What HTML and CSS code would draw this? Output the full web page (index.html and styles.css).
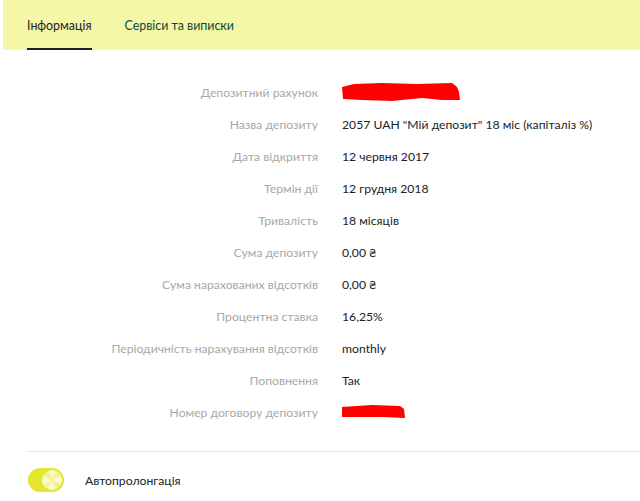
FILE: index.html
```html
<!DOCTYPE html>
<html lang="uk">
<head>
<meta charset="utf-8">
<link rel="stylesheet" href="styles.css">
</head>
<body>
<div class="tabs">
  <div class="tab active">Інформація</div>
  <div class="tab">Сервіси та виписки</div>
</div>
<div class="info">
  <div class="row"><div class="label">Депозитний рахунок</div><div class="value"><svg class="redact" width="120" height="20" viewBox="0 0 120 20"><path d="M0 5 L12 2 L40 1 L75 2 L110 1 L115 5 L117 10 L118 18 L100 18 L80 16 L50 19 L20 18 L1 17 Z" fill="#ff0000"/></svg></div></div>
  <div class="row"><div class="label">Назва депозиту</div><div class="value">2057 UAH "Мій депозит" 18 міс (капіталіз %)</div></div>
  <div class="row"><div class="label">Дата відкриття</div><div class="value">12 червня 2017</div></div>
  <div class="row"><div class="label">Термін дії</div><div class="value">12 грудня 2018</div></div>
  <div class="row"><div class="label">Тривалість</div><div class="value">18 місяців</div></div>
  <div class="row"><div class="label">Сума депозиту</div><div class="value">0,00 ₴</div></div>
  <div class="row"><div class="label">Сума нарахованих відсотків</div><div class="value">0,00 ₴</div></div>
  <div class="row"><div class="label">Процентна ставка</div><div class="value">16,25%</div></div>
  <div class="row"><div class="label">Періодичність нарахування відсотків</div><div class="value">monthly</div></div>
  <div class="row"><div class="label">Поповнення</div><div class="value">Так</div></div>
  <div class="row"><div class="label">Номер договору депозиту</div><div class="value"><svg class="redact" width="64" height="14" viewBox="0 0 64 14"><path d="M0 2 L30 0 L58 1 L62 4 L63 13 L40 12 L0 12 Z" fill="#ff0000"/></svg></div></div>
</div>
<div class="divider"></div>
<div class="toggle-row">
  <div class="toggle"><div class="knob"></div></div>
  <div class="toggle-label">Автопролонгація</div>
</div>
</body>
</html>
```
FILE: styles.css
```css
html, body {
  margin: 0;
  padding: 0;
  background: #ffffff;
  font-family: Lato, "Open Sans", sans-serif;
  font-size: 12.2px;
  color: #222;
}
.tabs {
  margin-left: 3px;
  height: 50px;
  background: #f4f6a8;
  display: flex;
  padding-left: 24px;
  gap: 33px;
}
.tab {
  height: 50px;
  line-height: 52px;
  box-sizing: border-box;
  color: #0b4a38;
  font-size: 12.4px;
}
.tab.active {
  color: #222;
  border-bottom: 2px solid #222;
}
.info {
  padding-top: 26px;
}
.row {
  display: flex;
  align-items: center;
  height: 32px;
}
.label {
  width: 318px;
  text-align: right;
  color: #a8a8a8;
  flex: none;
}
.value {
  margin-left: 24px;
  color: #222;
  display: flex;
  align-items: center;
}
.redact {
  display: block;
  flex: none;
}
.divider {
  margin: 23px 0 0 28px;
  height: 1px;
  background: #e6e6e6;
}
.toggle-row {
  display: flex;
  align-items: center;
  padding: 16px 0 0 28px;
}
.toggle {
  width: 36px;
  height: 24px;
  border-radius: 12px;
  background: #e3e52e;
  position: relative;
  flex: none;
}
.knob {
  position: absolute;
  right: 2px;
  top: 2px;
  width: 20px;
  height: 20px;
  border-radius: 50%;
  background: conic-gradient(#fbfcd0, #f0f290, #fdfde4, #eef083, #fbfcd0, #f2f49a, #fdfde4, #eef083, #fbfcd0);
}
.toggle-label {
  margin-left: 21px;
  color: #222;
}
```
